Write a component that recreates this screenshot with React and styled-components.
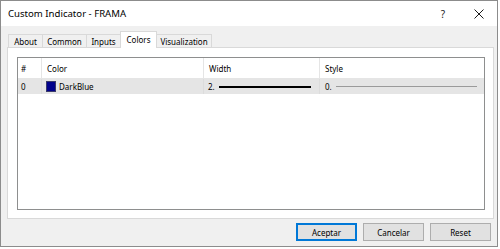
import React from 'react';
import styled, { createGlobalStyle } from 'styled-components';

const Global = createGlobalStyle`
  html, body { margin: 0; padding: 0; background: #fff; }
  body { font-family: "Noto Sans", "Liberation Sans", sans-serif; color: #000; }
`;

const Window = styled.div`
  width: 498px;
  height: 247px;
  box-sizing: border-box;
  border: 1px solid #8c8c8c;
  display: flex;
  flex-direction: column;
  background: #f0f0f0;
`;

const TitleBar = styled.div`
  height: 25px;
  flex: none;
  background: #fff;
  display: flex;
  align-items: center;
  padding-left: 7px;
`;

const Title = styled.span`
  flex: 1;
  font-size: 9.6px;
  line-height: 12px;
`;

const CaptionButton = styled.div`
  width: 36px;
  height: 25px;
  display: flex;
  align-items: center;
  justify-content: center;
  font-size: 10px;
  color: #222;
`;

const Body = styled.div`
  flex: 1;
  display: flex;
  flex-direction: column;
  padding: 5px 3px 0 6px;
  min-height: 0;
`;

const TabStrip = styled.div`
  height: 16px;
  flex: none;
  display: flex;
  align-items: flex-end;
  padding-left: 1px;
`;

const Tab = styled.div`
  box-sizing: border-box;
  width: ${p => p.$w}px;
  height: ${p => (p.$active ? 17 : 13)}px;
  margin-bottom: ${p => (p.$active ? -1 : 0)}px;
  margin-left: -1px;
  &:first-child { margin-left: 0; }
  border: 1px solid #d9d9d9;
  border-bottom: none;
  background: ${p => (p.$active ? '#fff' : '#f0f0f0')};
  position: relative;
  z-index: ${p => (p.$active ? 1 : 0)};
  font-size: 8px;
  display: flex;
  justify-content: center;
  align-items: ${p => (p.$active ? 'flex-start' : 'center')};
  padding-top: ${p => (p.$active ? 2 : 0)}px;
  line-height: 11px;
`;

const Panel = styled.div`
  height: 172px;
  flex: none;
  box-sizing: border-box;
  border: 1px solid #d9d9d9;
  background: #fff;
  padding: 9px 8px 8px 9px;
  display: flex;
`;

const List = styled.div`
  flex: 1;
  border: 1px solid #8e8f8f;
  background: #fff;
  display: flex;
  flex-direction: column;
`;

const Row = styled.div`
  display: grid;
  grid-template-columns: 24px 162px 116px 1fr;
  height: ${p => (p.$header ? 20 : 15)}px;
  background: ${p => (p.$selected ? '#e5e5e5' : '#fff')};
  border-bottom: ${p => (p.$header ? '1px solid #e5e5e5' : 'none')};
  font-size: 8px;
`;

const Cell = styled.div`
  display: flex;
  align-items: center;
  gap: 4px;
  padding-left: ${p => p.$pad}px;
  padding-right: ${p => p.$padR || 0}px;
  border-right: 1px solid ${p => (p.$header ? '#e5e5e5' : '#dcdcdc')};
  &:last-child { border-right: none; }
  white-space: nowrap;
`;

const Swatch = styled.span`
  width: 10px;
  height: 11px;
  background: #00008b;
  border: 1px solid #3a3a6a;
  box-sizing: border-box;
  flex: none;
  margin-right: -1px;
`;

const LineSample = styled.span`
  flex: 1;
  height: ${p => p.$thick}px;
  background: ${p => p.$color};
`;

const Footer = styled.div`
  height: 27px;
  flex: none;
  display: flex;
  justify-content: flex-end;
  align-items: flex-start;
  padding-top: 4px;
  box-sizing: border-box;
  gap: 6px;
  padding-right: 3px;
`;

const Button = styled.div`
  box-sizing: border-box;
  width: 61px;
  height: 18px;
  background: #e1e1e1;
  border: 1px solid ${p => (p.$default ? '#0078d7' : '#adadad')};
  box-shadow: ${p => (p.$default ? 'inset 0 0 0 1px #0078d7' : 'none')};
  font-size: 8px;
  display: flex;
  align-items: center;
  justify-content: center;
`;

const CloseIcon = () => (
  <svg width="10" height="10" viewBox="0 0 10 10">
    <path d="M0.5 0.5 L9.5 9.5 M9.5 0.5 L0.5 9.5" stroke="#000" strokeWidth="0.9" fill="none" />
  </svg>
);

export default function App() {
  return (
    <>
      <Global />
      <Window>
        <TitleBar>
          <Title>Custom Indicator - FRAMA</Title>
          <CaptionButton>?</CaptionButton>
          <CaptionButton><CloseIcon /></CaptionButton>
        </TitleBar>
        <Body>
          <TabStrip>
            <Tab $w={35}>About</Tab>
            <Tab $w={45}>Common</Tab>
            <Tab $w={35}>Inputs</Tab>
            <Tab $w={37} $active>Colors</Tab>
            <Tab $w={56}>Visualization</Tab>
          </TabStrip>
          <Panel>
            <List>
              <Row $header>
                <Cell $pad={3} $header>#</Cell>
                <Cell $pad={5} $header>Color</Cell>
                <Cell $pad={5} $header>Width</Cell>
                <Cell $pad={5} $header>Style</Cell>
              </Row>
              <Row $selected>
                <Cell $pad={3}>0</Cell>
                <Cell $pad={4}><Swatch />DarkBlue</Cell>
                <Cell $pad={4} $padR={8}>2.<LineSample $thick={2} $color="#000" /></Cell>
                <Cell $pad={5} $padR={7}>0.<LineSample $thick={1} $color="#9a9a9a" /></Cell>
              </Row>
            </List>
          </Panel>
          <Footer>
            <Button $default>Aceptar</Button>
            <Button>Cancelar</Button>
            <Button>Reset</Button>
          </Footer>
        </Body>
      </Window>
    </>
  );
}
